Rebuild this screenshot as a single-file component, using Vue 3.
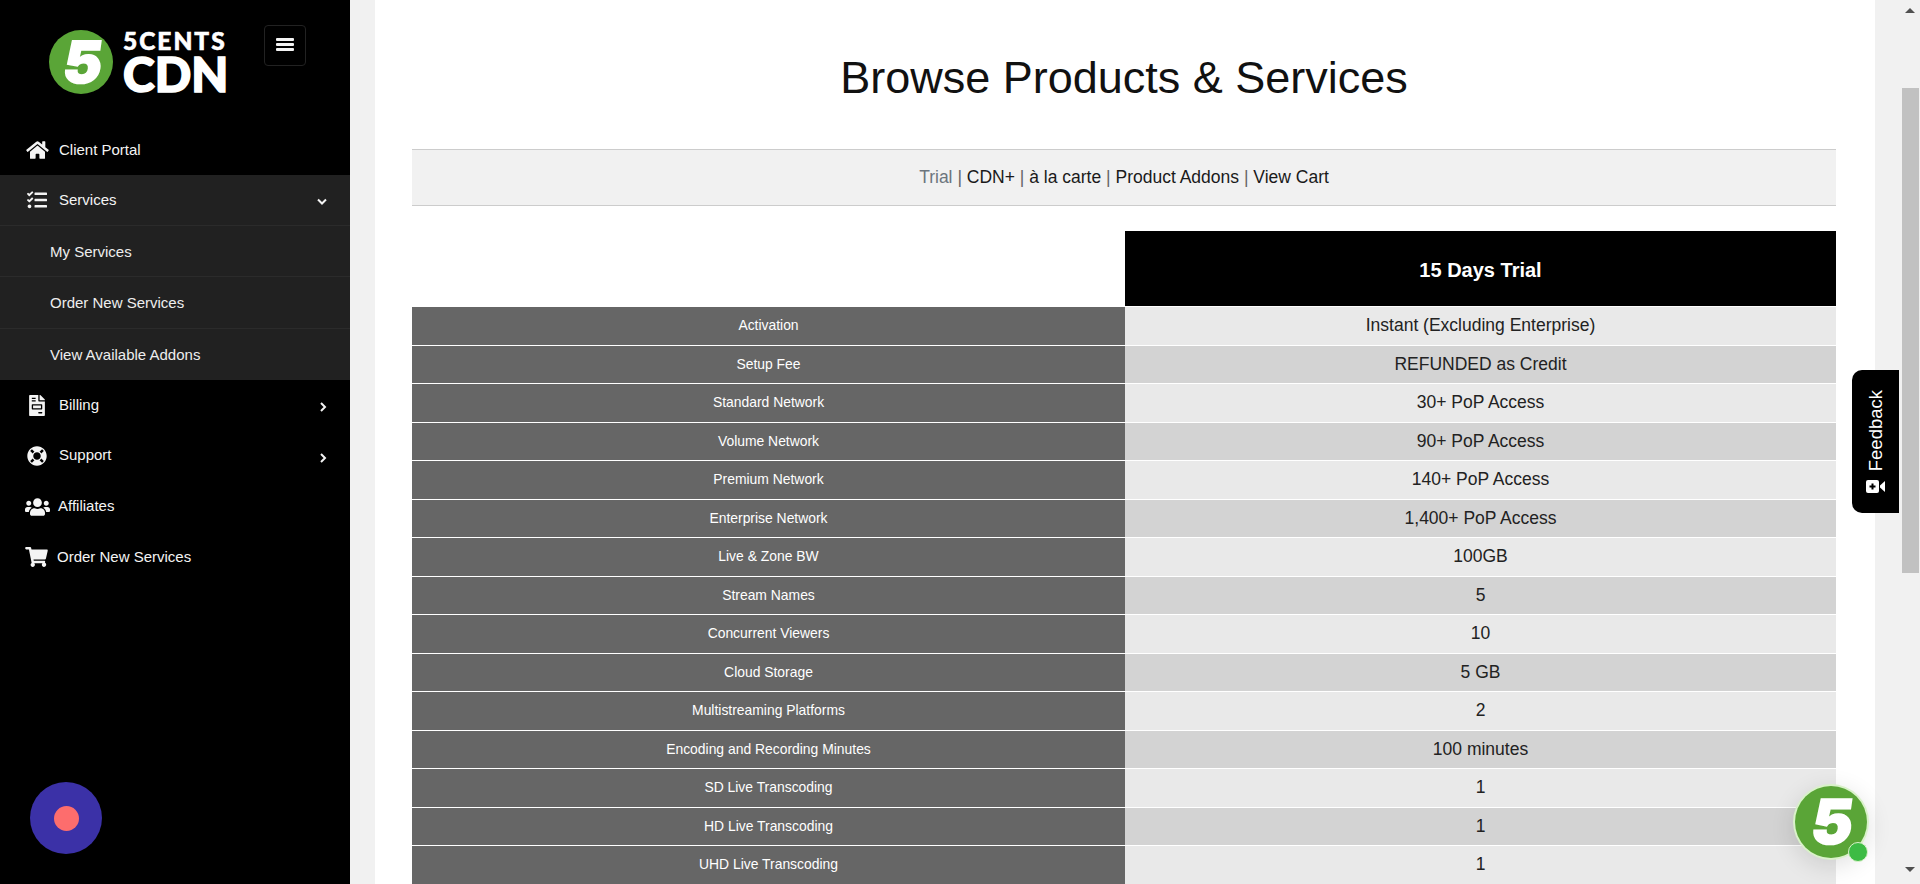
<template>
  <div class="page">
    <aside class="sidebar">
      <div class="brand">
        <svg class="logo" width="190" height="84" viewBox="0 0 190 84">
          <circle cx="33" cy="34" r="32" fill="#5aa537" />
          <text x="33" y="55" text-anchor="middle" class="logo-five" transform="skewX(-8) translate(7 0)">5</text>
          <text x="75" y="22" class="logo-small">5CENTS</text>
          <text x="75" y="64" class="logo-big">CDN</text>
        </svg>
        <button class="burger" type="button"><span></span><span></span><span></span></button>
      </div>

      <nav class="menu">
        <template v-for="item in menu" :key="item.label">
          <a class="menu-item" :class="[{ 'menu-item--open': item.open }, item.cls]">
            <span class="menu-icon">
              <svg :width="item.w" :height="item.h" :viewBox="item.vb"><path :d="item.d" fill="#f4f4f4" /></svg>
            </span>
            <span class="menu-label">{{ item.label }}</span>
            <svg v-if="item.arrow === 'down'" class="chev" width="10" height="8" viewBox="0 0 10 8"><path d="M1 1.5l4 4 4-4" /></svg>
            <svg v-if="item.arrow === 'right'" class="chev" width="8" height="10" viewBox="0 0 8 10"><path d="M2 1l4 4-4 4" /></svg>
          </a>
          <div v-if="item.children" class="submenu">
            <a v-for="c in item.children" :key="c" class="submenu-item">{{ c }}</a>
          </div>
        </template>
      </nav>

      <div class="recorder"><span></span></div>
    </aside>

    <main class="content">
      <div class="panel">
        <h1>Browse Products &amp; Services</h1>

        <div class="cat-nav">
          <template v-for="(link, i) in links" :key="link">
            <span v-if="i" class="sep"> | </span>
            <a :class="{ active: i === 0 }">{{ link }}</a>
          </template>
        </div>

        <div class="compare">
          <div class="compare-head">15 Days Trial</div>
          <div v-for="row in rows" :key="row[0]" class="compare-row">
            <div class="cell-name">{{ row[0] }}</div>
            <div class="cell-value">{{ row[1] }}</div>
          </div>
        </div>
      </div>

      <div class="feedback">
        <span class="feedback-text">Feedback</span>
        <svg width="19" height="13" viewBox="0 0 19 13">
          <rect x="0" y="0" width="13" height="13" rx="2" fill="#fff" />
          <path d="M6.5 3.5v6M3.5 6.5h6" stroke="#000" stroke-width="2" />
          <path d="M14 5.5l5-4.5v11l-5-4.5z" fill="#fff" />
        </svg>
      </div>

      <div class="chat">
        <svg width="76" height="76" viewBox="0 0 76 76">
          <circle cx="38" cy="38" r="36" fill="#5aa537" />
          <text x="38" y="60" text-anchor="middle" class="chat-five" transform="skewX(-8) translate(7 0)">5</text>
        </svg>
        <span class="chat-dot"></span>
      </div>
    </main>

    <div class="scrollbar">
      <span class="arrow arrow--up"></span>
      <span class="thumb"></span>
      <span class="arrow arrow--down"></span>
    </div>
  </div>
</template>

<script setup>
const menu = [
  {
    label: 'Client Portal', cls: 'menu-item--first',
    vb: '0 0 576 512', w: 23, h: 20,
    d: 'M280.37 148.26L96 300.11V464a16 16 0 0 0 16 16l112.06-.29a16 16 0 0 0 15.92-16V368a16 16 0 0 1 16-16h64a16 16 0 0 1 16 16v95.64a16 16 0 0 0 16 16.05L464 480a16 16 0 0 0 16-16V300L295.67 148.26a12.19 12.19 0 0 0-15.3 0zM571.6 251.47L488 182.56V44.05a12 12 0 0 0-12-12h-56a12 12 0 0 0-12 12v72.61L318.47 43a48 48 0 0 0-61 0L4.34 251.47a12 12 0 0 0-1.6 16.9l25.5 31A12 12 0 0 0 45.15 301l235.22-193.74a12.19 12.19 0 0 1 15.3 0L530.9 301a12 12 0 0 0 16.9-1.6l25.5-31a12 12 0 0 0-1.7-16.93z',
  },
  {
    label: 'Services', arrow: 'down', open: true,
    vb: '0 0 512 512', w: 20, h: 20,
    d: 'M139.61 35.5a12 12 0 0 0-17 0L58.93 98.81l-22.7-22.12a12 12 0 0 0-17 0L3.53 92.41a12 12 0 0 0 0 17l47.59 47.4a12.78 12.78 0 0 0 17.61 0l15.59-15.62L156.52 69a12.09 12.09 0 0 0 .09-17zm0 159.19a12 12 0 0 0-17 0l-63.68 63.72-22.7-22.1a12 12 0 0 0-17 0L3.53 252a12 12 0 0 0 0 17L51 316.5a12.77 12.77 0 0 0 17.6 0l15.7-15.69 72.2-72.22a12 12 0 0 0 .09-16.9zM64 368c-26.49 0-48.59 21.5-48.59 48S37.53 464 64 464a48 48 0 0 0 0-96zm432 16H208a16 16 0 0 0-16 16v32a16 16 0 0 0 16 16h288a16 16 0 0 0 16-16v-32a16 16 0 0 0-16-16zm0-320H208a16 16 0 0 0-16 16v32a16 16 0 0 0 16 16h288a16 16 0 0 0 16-16V80a16 16 0 0 0-16-16zm0 160H208a16 16 0 0 0-16 16v32a16 16 0 0 0 16 16h288a16 16 0 0 0 16-16v-32a16 16 0 0 0-16-16z',
    children: ['My Services', 'Order New Services', 'View Available Addons'],
  },
  {
    label: 'Billing', arrow: 'right',
    vb: '0 0 384 512', w: 16, h: 21,
    d: 'M288 256H96v64h192v-64zm89-151L279.1 7c-4.5-4.5-10.6-7-17-7H256v128h128v-6.1c0-6.3-2.5-12.4-7-16.9zm-153 31V0H24C10.7 0 0 10.7 0 24v464c0 13.3 10.7 24 24 24h336c13.3 0 24-10.7 24-24V160H248c-13.2 0-24-10.8-24-24zM64 72c0-4.4 3.6-8 8-8h80c4.4 0 8 3.6 8 8v16c0 4.4-3.6 8-8 8H72c-4.4 0-8-3.6-8-8V72zm0 64c0-4.4 3.6-8 8-8h80c4.4 0 8 3.6 8 8v16c0 4.4-3.6 8-8 8H72c-4.4 0-8-3.6-8-8v-16zm256 304c0 4.4-3.6 8-8 8h-80c-4.4 0-8-3.6-8-8v-16c0-4.4 3.6-8 8-8h80c4.4 0 8 3.6 8 8v16zm0-200v96c0 8.8-7.2 16-16 16H80c-8.8 0-16-7.2-16-16v-96c0-8.8 7.2-16 16-16h224c8.8 0 16 7.2 16 16z',
  },
  {
    label: 'Support', arrow: 'right',
    vb: '0 0 512 512', w: 20, h: 20,
    d: 'M256 8C119.033 8 8 119.033 8 256s111.033 248 248 248 248-111.033 248-248S392.967 8 256 8zm173.696 119.559l-63.399 63.399c-10.987-18.559-26.67-34.252-45.255-45.255l63.399-63.399a218.396 218.396 0 0 1 45.255 45.255zM256 352c-53.019 0-96-42.981-96-96s42.981-96 96-96 96 42.981 96 96-42.981 96-96 96zM127.559 82.304l63.399 63.399c-18.559 10.987-34.252 26.67-45.255 45.255l-63.399-63.399a218.372 218.372 0 0 1 45.255-45.255zM82.304 384.441l63.399-63.399c10.987 18.559 26.67 34.252 45.255 45.255l-63.399 63.399a218.396 218.396 0 0 1-45.255-45.255zm302.137 45.255l-63.399-63.399c18.559-10.987 34.252-26.67 45.255-45.255l63.399 63.399a218.429 218.429 0 0 1-45.255 45.255z',
  },
  {
    label: 'Affiliates', cls: 'menu-item--t1',
    vb: '0 0 640 512', w: 25, h: 20,
    d: 'M96 224c35.3 0 64-28.7 64-64s-28.7-64-64-64-64 28.7-64 64 28.7 64 64 64zm448 0c35.3 0 64-28.7 64-64s-28.7-64-64-64-64 28.7-64 64 28.7 64 64 64zm32 32h-64c-17.6 0-33.5 7.1-45.1 18.6 40.3 22.1 68.9 62 75.1 109.4h66c17.7 0 32-14.3 32-32v-32c0-35.3-28.7-64-64-64zm-256 0c61.9 0 112-50.1 112-112S381.9 32 320 32 208 82.1 208 144s50.1 112 112 112zm76.8 32h-8.3c-20.8 10-43.9 16-68.5 16s-47.6-6-68.5-16h-8.3C179.6 288 128 339.6 128 403.2V432c0 26.5 21.5 48 48 48h288c26.5 0 48-21.5 48-48v-28.8c0-63.6-51.6-115.2-115.2-115.2zm-223.7-13.4C161.5 263.1 145.6 256 128 256H64c-35.3 0-64 28.7-64 64v32c0 17.7 14.3 32 32 32h65.9c6.3-47.4 34.9-87.3 75.2-109.4z',
  },
  {
    label: 'Order New Services', cls: 'menu-item--t2',
    vb: '0 0 576 512', w: 23, h: 20,
    d: 'M528.12 301.319l47.273-208C578.806 78.301 567.391 64 551.99 64H159.208l-9.166-44.81C147.758 8.021 137.93 0 126.529 0H24C10.745 0 0 10.745 0 24v16c0 13.255 10.745 24 24 24h69.883l70.248 343.435C147.325 417.1 136 435.222 136 456c0 30.928 25.072 56 56 56s56-25.072 56-56c0-15.674-6.447-29.835-16.824-40h209.647C430.447 426.165 424 440.326 424 456c0 30.928 25.072 56 56 56s56-25.072 56-56c0-22.172-12.888-41.332-31.579-50.405l5.517-24.276c3.413-15.018-8.002-29.319-23.403-29.319H218.117l-6.545-32h293.145c11.206 0 20.92-7.754 23.403-18.681z',
  },
];

const links = ['Trial', 'CDN+', 'à la carte', 'Product Addons', 'View Cart'];

const rows = [
  ['Activation', 'Instant (Excluding Enterprise)'],
  ['Setup Fee', 'REFUNDED as Credit'],
  ['Standard Network', '30+ PoP Access'],
  ['Volume Network', '90+ PoP Access'],
  ['Premium Network', '140+ PoP Access'],
  ['Enterprise Network', '1,400+ PoP Access'],
  ['Live & Zone BW', '100GB'],
  ['Stream Names', '5'],
  ['Concurrent Viewers', '10'],
  ['Cloud Storage', '5 GB'],
  ['Multistreaming Platforms', '2'],
  ['Encoding and Recording Minutes', '100 minutes'],
  ['SD Live Transcoding', '1'],
  ['HD Live Transcoding', '1'],
  ['UHD Live Transcoding', '1'],
];
</script>

<style scoped>
.page {
  display: flex;
  height: 884px;
  overflow: hidden;
  font-family: "Liberation Sans", Arial, sans-serif;
  background: #f1f1f1;
}

.sidebar {
  position: relative;
  width: 350px;
  flex: none;
  background: #000;
  color: #f4f4f4;
}
.brand {
  display: flex;
  align-items: flex-start;
  height: 125px;
  padding: 25px 0 0 48px;
  box-sizing: border-box;
}
.logo {
  flex: none;
  margin-top: 3px;
}
.logo-five {
  font-family: Inter, "Open Sans", sans-serif;
  font-weight: 900;
  font-size: 58px;
  fill: #fff;
  stroke: #fff;
  stroke-width: 1.5;
}
.logo-small {
  font-family: Lato, sans-serif;
  font-weight: 900;
  font-size: 24.5px;
  letter-spacing: 2px;
  fill: #fff;
  stroke: #fff;
  stroke-width: 0.6;
}
.logo-big {
  font-family: Lato, sans-serif;
  font-weight: 900;
  font-size: 48px;
  fill: #fff;
  stroke: #fff;
  stroke-width: 1.6;
}
.burger {
  display: flex;
  flex-direction: column;
  justify-content: center;
  align-items: center;
  gap: 2px;
  width: 42px;
  height: 41px;
  margin-left: 26px;
  padding: 0 0 2px;
  background: transparent;
  border: 1px solid #222;
  border-radius: 4px;
}
.burger span {
  display: block;
  width: 18px;
  height: 3px;
  border-radius: 1px;
  background: #f4f4f4;
}

.menu-item {
  display: flex;
  align-items: center;
  height: 50.7px;
  padding: 0 23px 0 20px;
  font-size: 15px;
  color: #f4f4f4;
}
.menu-item--first {
  height: 50px;
}
.menu-item--open {
  height: 51px;
  background: #212121;
  border-bottom: 1px solid #2b2b2b;
  box-sizing: border-box;
}
.menu-icon {
  display: flex;
  justify-content: center;
  flex: none;
  width: 34px;
  margin-right: 5px;
}
.menu-item--t1 .menu-icon {
  margin-right: 4px;
}
.menu-item--t2 .menu-icon {
  width: 32px;
  margin-right: 5px;
}
.menu-label {
  flex: 1;
  margin-top: -2px;
}
.chev {
  fill: none;
  stroke: #f4f4f4;
  stroke-width: 2;
  margin-top: 4px;
}
.submenu {
  background: #212121;
}
.submenu-item {
  display: flex;
  align-items: center;
  height: 51.3px;
  box-sizing: border-box;
  padding-left: 50px;
  font-size: 15px;
  color: #eee;
  border-bottom: 1px solid #2b2b2b;
}
.submenu-item:last-child {
  border-bottom: 0;
}
.recorder {
  position: absolute;
  left: 30px;
  top: 782px;
  display: flex;
  align-items: center;
  justify-content: center;
  width: 72px;
  height: 72px;
  border-radius: 50%;
  background: #3b31a7;
}
.recorder span {
  width: 25px;
  height: 25px;
  border-radius: 50%;
  background: #fd6d6d;
}

.content {
  position: relative;
  flex: 1;
  min-width: 0;
  padding: 0 25px;
}
.panel {
  height: 884px;
  padding: 0 39px 0 37px;
  background: #fff;
}
h1 {
  margin: 0;
  padding-top: 51px;
  height: 149px;
  box-sizing: border-box;
  font-size: 45px;
  font-weight: 400;
  line-height: 54px;
  text-align: center;
  color: #111;
}
.cat-nav {
  height: 57px;
  box-sizing: border-box;
  border-top: 1px solid #ccc;
  border-bottom: 1px solid #ccc;
  background: #f1f1f1;
  text-align: center;
  font-size: 17.5px;
  line-height: 55px;
  color: #666;
}
.cat-nav a {
  color: #1a1a1a;
}
.cat-nav a.active {
  color: #6c757d;
}
.sep {
  white-space: pre;
}
.compare {
  margin-top: 25px;
}
.compare-head {
  height: 75px;
  margin-left: 713px;
  margin-bottom: 1px;
  background: #000;
  color: #fff;
  font-size: 20px;
  font-weight: 700;
  line-height: 78px;
  text-align: center;
}
.compare-row {
  display: grid;
  grid-template-columns: 713px 1fr;
  height: 37.5px;
  margin-bottom: 1px;
  line-height: 37.5px;
  text-align: center;
}
.cell-name {
  background: #666;
  color: #fff;
  font-size: 13.9px;
}
.cell-value {
  background: #e9e9e9;
  color: #222;
  font-size: 17.5px;
}
.compare-row:nth-child(odd) .cell-value {
  background: #d3d3d3;
}

.feedback {
  position: absolute;
  right: 1px;
  top: 370px;
  display: flex;
  flex-direction: column;
  align-items: center;
  justify-content: center;
  gap: 8px;
  width: 47px;
  height: 143px;
  border-radius: 10px 0 0 10px;
  background: #000;
  color: #fff;
}
.feedback-text {
  writing-mode: vertical-rl;
  transform: rotate(180deg);
  font-size: 18.5px;
}
.chat {
  position: absolute;
  left: 1443px;
  top: 784px;
  width: 76px;
  height: 76px;
  border-radius: 50%;
  background: #d9f2c9;
  box-shadow: 0 6px 24px rgba(0, 0, 0, 0.12);
}
.chat svg {
  display: block;
}
.chat-five {
  font-family: Inter, "Open Sans", sans-serif;
  font-weight: 900;
  font-size: 62px;
  fill: #fff;
  stroke: #fff;
  stroke-width: 1.5;
}
.chat-dot {
  position: absolute;
  right: 1px;
  bottom: -2px;
  width: 18px;
  height: 18px;
  border-radius: 50%;
  border: 1px solid #d9f2c9;
  background: #3dbb44;
}

.scrollbar {
  display: flex;
  flex-direction: column;
  align-items: center;
  flex: none;
  width: 20px;
  background: #f1f1f1;
}
.arrow {
  width: 0;
  height: 0;
  border-left: 5px solid transparent;
  border-right: 5px solid transparent;
}
.arrow--up {
  margin-top: 8px;
  border-bottom: 5px solid #505050;
}
.arrow--down {
  margin-top: 294px;
  border-top: 5px solid #505050;
}
.thumb {
  width: 17px;
  height: 485px;
  margin-top: 75px;
  background: #c1c1c1;
}
</style>

<style>
html,
body {
  margin: 0;
  overflow: hidden;
}
</style>
